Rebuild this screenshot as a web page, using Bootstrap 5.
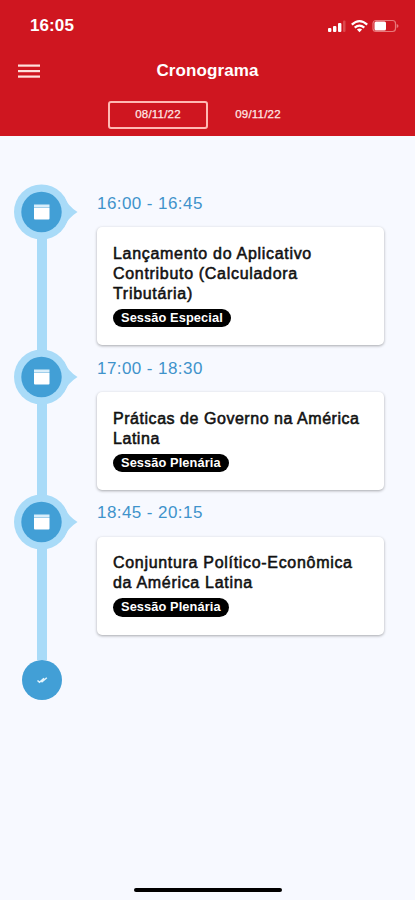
<!DOCTYPE html>
<html lang="pt-BR">
<head>
<meta charset="utf-8">
<meta name="viewport" content="width=device-width, initial-scale=1">
<title>Cronograma</title>
<link href="https://cdn.jsdelivr.net/npm/bootstrap@5.3.0/dist/css/bootstrap.min.css" rel="stylesheet">
<style>
body{font-family:"Liberation Sans",Arial,sans-serif;background:#f7f9ff;color:#111;height:900px;overflow:hidden}
.app-head{background:#cf1620;height:136px;color:#fff}
.status{height:51px;padding:0 16px 0 30px}
.clock{font-size:17px;font-weight:700;letter-spacing:.1px;line-height:20px}
.titlebar{height:39px;padding:0 18px}
.titlebar h1{font-size:17px;font-weight:700;line-height:20px;letter-spacing:.1px}
.side{width:22px}
.days{height:28px;margin-top:11px;padding-right:0}
.day{width:100px;height:28px;font-size:11.5px;line-height:1;letter-spacing:.2px;color:#ffe9e6;padding:0 0 0 1px;border:2px solid transparent;border-radius:3px;-webkit-text-stroke:.25px #ffe9e6}
.day.on{border-color:#ffb9b3}
.timeline{padding-top:48px}
.rail{width:97px;padding-left:14px;background:linear-gradient(#a9dbf8,#a9dbf8) 36.5px 0/10px 100% no-repeat}
.first .rail{background-position:36.5px 28px}
.pin{display:block}
.entry{width:287px}
.e1{height:165px}.e2{height:144.5px}.e3{height:166.5px}
.hours{font-size:17px;line-height:20px;letter-spacing:.43px;color:#3f93cb;margin:9.5px 0 13.5px}
.talk{border:0;border-radius:5px;box-shadow:0 1px 3px rgba(0,0,0,.33);padding:16.5px 16px 18px;background:#fff}
.talk h2{font-size:16px;line-height:20px;font-weight:400;letter-spacing:.54px;margin:0 0 5px;-webkit-text-stroke:.55px #111;white-space:nowrap}
.e1 h2,.e3 h2{letter-spacing:.69px}
.kind{font-size:12.8px;font-weight:700;line-height:18.5px;padding:0 8px;border-radius:10px;background:#000;letter-spacing:.1px}
.done{margin-left:21.5px}
.homebar{width:148px;height:4px;border-radius:2px;background:#000;bottom:8px;left:134px}
</style>
<script src="https://cdn.jsdelivr.net/npm/bootstrap@5.3.0/dist/js/bootstrap.bundle.min.js"></script>
</head>
<body class="position-relative">
<svg width="0" height="0" class="position-absolute">
  <symbol id="pin" viewBox="0 0 64 56">
    <path d="M50 13Q54 22 63.500 28Q54 34 50 43Z" fill="#a9dbf8"/>
    <circle cx="27.500" cy="28" r="27.500" fill="#a9dbf8"/>
    <circle cx="27.500" cy="28" r="20.200" fill="#429fd6"/>
    <path d="M20 20.500h15.500v2.500H20z" fill="#d9eefa"/>
    <path d="M20 23.500h15.500v11q0 1-1 1H21q-1 0-1-1z" fill="#fff"/>
  </symbol>
</svg>
<header class="app-head">
  <div class="status d-flex align-items-center justify-content-between">
    <span class="clock">16:05</span>
    <svg width="72" height="16" viewBox="0 0 72 16">
      <g fill="#fff"><rect x="1" y="10" width="3.400" height="4" rx="1"/><rect x="6" y="8" width="3.400" height="6" rx="1"/><rect x="11" y="5" width="3.400" height="9" rx="1"/></g>
      <rect x="16" y="2.500" width="2.500" height="11.500" rx="1" fill="#dc484d"/>
      <g fill="none" stroke="#fff" stroke-width="2.200"><path d="M24.800 6.600Q32.500-.4 40.200 6.600"/><path d="M27.700 9.700Q32.500 5.500 37.300 9.700"/></g>
      <path d="M32.500 14.300L29.900 11.600Q32.500 9.500 35.100 11.600Z" fill="#fff"/>
      <rect x="46" y="2.500" width="22.500" height="11" rx="3" fill="none" stroke="#e8787a" stroke-width="1.200"/>
      <rect x="47.500" y="3.500" width="11.500" height="9" rx="1.500" fill="#fff"/>
      <path d="M69.700 6v4q1.800-.6 1.800-2T69.700 6z" fill="#e8787a"/>
    </svg>
  </div>
  <div class="titlebar d-flex align-items-center justify-content-between">
    <svg class="side" height="16" viewBox="0 0 22 16" fill="#ffe0dc"><rect y="1.500" width="22" height="2.200"/><rect y="7" width="22" height="2.200"/><rect y="12.500" width="22" height="2.200"/></svg>
    <h1 class="m-0">Cronograma</h1>
    <span class="side"></span>
  </div>
  <nav class="days d-flex justify-content-center">
    <button class="day on btn">08/11/22</button>
    <button class="day btn">09/11/22</button>
  </nav>
</header>
<main class="timeline">
  <section class="e1 first d-flex">
    <div class="rail"><svg class="pin" width="64" height="56"><use href="#pin"/></svg></div>
    <div class="entry"><p class="hours">16:00 - 16:45</p>
      <article class="talk card"><h2>Lançamento do Aplicativo<br>Contributo (Calculadora<br>Tributária)</h2><span class="kind badge align-self-start">Sessão Especial</span></article></div>
  </section>
  <section class="e2 d-flex">
    <div class="rail"><svg class="pin" width="64" height="56"><use href="#pin"/></svg></div>
    <div class="entry"><p class="hours">17:00 - 18:30</p>
      <article class="talk card"><h2>Práticas de Governo na América<br>Latina</h2><span class="kind badge align-self-start">Sessão Plenária</span></article></div>
  </section>
  <section class="e3 d-flex">
    <div class="rail"><svg class="pin" width="64" height="56"><use href="#pin"/></svg></div>
    <div class="entry"><p class="hours">18:45 - 20:15</p>
      <article class="talk card"><h2>Conjuntura Político-Econômica<br>da América Latina</h2><span class="kind badge align-self-start">Sessão Plenária</span></article></div>
  </section>
  <svg class="done d-block" width="40" height="40" viewBox="0 0 40 40"><circle cx="20" cy="20" r="20" fill="#429fd6"/><path d="M15.500 20.500l2 1.800 4.500-4M19.500 22.300l5.300-4.600" fill="none" stroke="#e3f3fc" stroke-width="1.500"/></svg>
</main>
<div class="homebar position-absolute"></div>
</body>
</html>
